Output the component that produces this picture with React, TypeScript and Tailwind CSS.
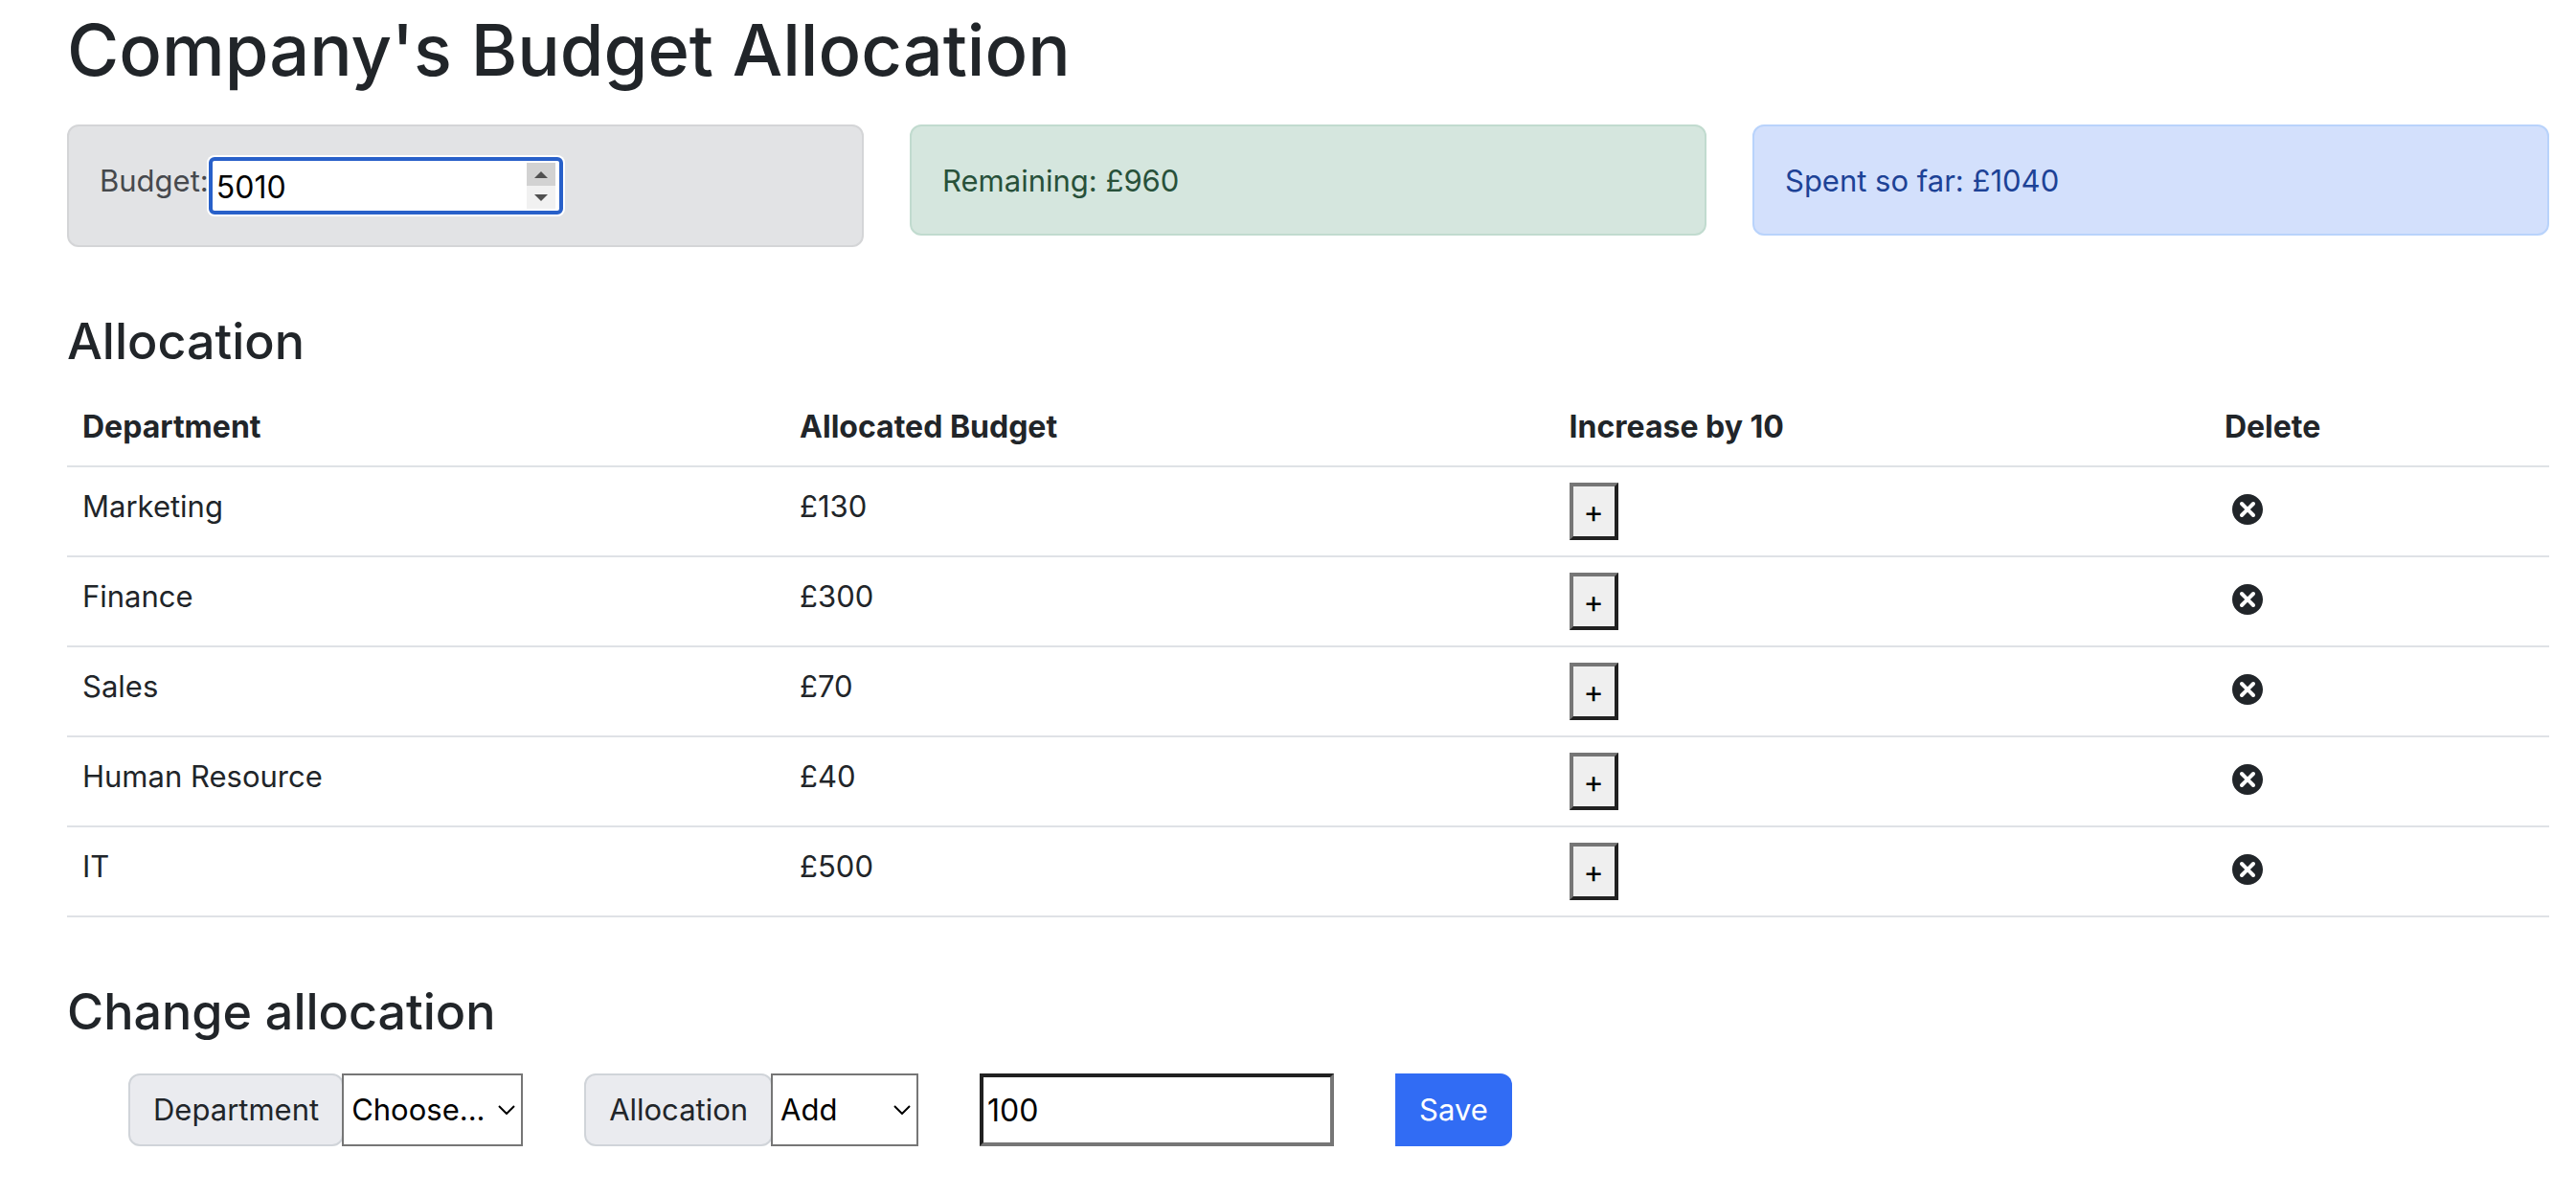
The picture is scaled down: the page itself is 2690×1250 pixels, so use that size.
import { useState } from "react";
import type { ReactNode } from "react";

type Department = { name: string; budget: number };

const initial: Department[] = [
  { name: "Marketing", budget: 130 },
  { name: "Finance", budget: 300 },
  { name: "Sales", budget: 70 },
  { name: "Human Resource", budget: 40 },
  { name: "IT", budget: 500 },
];

function DeleteIcon() {
  return (
    <svg viewBox="0 0 24 24" className="size-12 fill-[#212529]" aria-hidden="true">
      <path d="M12 4c-4.419 0-8 3.582-8 8s3.581 8 8 8 8-3.582 8-8-3.581-8-8-8zm3.707 10.293c.391.391.391 1.023 0 1.414-.195.195-.451.293-.707.293s-.512-.098-.707-.293l-2.293-2.293-2.293 2.293c-.195.195-.451.293-.707.293s-.512-.098-.707-.293c-.391-.391-.391-1.023 0-1.414l2.293-2.293-2.293-2.293c-.391-.391-.391-1.023 0-1.414s1.023-.391 1.414 0l2.293 2.293 2.293-2.293c.391-.391 1.023-.391 1.414 0s.391 1.023 0 1.414l-2.293 2.293 2.293 2.293z" />
    </svg>
  );
}

function Chevron() {
  return (
    <svg
      viewBox="0 0 18 10"
      className="pointer-events-none absolute top-1/2 right-2 h-2.5 w-4.5 -translate-y-1/2 fill-none stroke-black stroke-2"
      aria-hidden="true"
    >
      <path d="M1 1l8 8 8-8" />
    </svg>
  );
}

function SelectGroup({ id, label, width, children }: { id: string; label: string; width: string; children: ReactNode }) {
  return (
    <div className="flex h-19">
      <label
        htmlFor={id}
        className="flex items-center rounded-xl border-2 border-[#d0d4d9] bg-[#eaebef] px-6 text-[31px]"
      >
        {label}
      </label>
      <div className="relative -ml-0.5 flex">
        <select
          id={id}
          className={`${width} appearance-none border-2 border-[#767676] bg-white pl-2 text-[31px] text-black`}
        >
          {children}
        </select>
        <Chevron />
      </div>
    </div>
  );
}

export default function App() {
  const [budget, setBudget] = useState("5010");
  const [cost, setCost] = useState("100");
  const [rows, setRows] = useState(initial);
  const step = (n: number) => setBudget(String(Number(budget) + n));

  return (
    <main className="bg-white pr-7 pl-[70px] font-['Inter',sans-serif] text-[31px] leading-12 text-[#212529]">
      <h1 className="pt-1 text-[74px] leading-24 font-medium">Company's Budget Allocation</h1>

      <div className="mt-[30px] grid grid-cols-3 items-start gap-12">
        <div className="flex rounded-xl border-2 border-[#d4d5d7] bg-[#e2e3e5] p-8 text-[#46494d]">
          <label htmlFor="budget" className="leading-[50px]">
            Budget:
          </label>
          <div className="relative flex">
            <input
              id="budget"
              type="text"
              inputMode="numeric"
              value={budget}
              onChange={(e) => setBudget(e.target.value)}
              className="h-15 w-[370px] rounded-md border-4 border-[#2860c9] bg-white pt-0.5 pl-1 text-[32px] text-black ring-2 ring-white outline-none"
            />
            <div className="absolute top-1.5 right-2 flex h-12 w-[30px] flex-col">
              <button
                type="button"
                aria-label="Increase budget"
                onClick={() => step(10)}
                className="flex flex-1 items-center justify-center bg-[#d2d2d2]"
              >
                <svg viewBox="0 0 14 7" className="h-[7px] w-3.5 fill-[#505050]">
                  <path d="M0 7l7-7 7 7z" />
                </svg>
              </button>
              <button
                type="button"
                aria-label="Decrease budget"
                onClick={() => step(-10)}
                className="flex flex-1 items-center justify-center bg-[#f1f1f1]"
              >
                <svg viewBox="0 0 14 7" className="h-[7px] w-3.5 fill-[#505050]">
                  <path d="M0 0l7 7 7-7z" />
                </svg>
              </button>
            </div>
          </div>
        </div>
        <div className="rounded-xl border-2 border-[#c1dbcf] bg-[#d5e6de] px-8 pt-[33px] pb-[31px] text-[#28513a]">
          Remaining: £960
        </div>
        <div className="rounded-xl border-2 border-[#b9d3fb] bg-[#d3e0fc] px-8 pt-[33px] pb-[31px] text-[#1d4296]">
          Spent so far: £1040
        </div>
      </div>

      <h2 className="mt-16 text-[52px] leading-[70px] font-medium">Allocation</h2>

      <table className="mt-3.5 w-full table-fixed border-collapse text-left">
        <colgroup>
          <col className="w-[28.9%]" />
          <col className="w-[31%]" />
          <col className="w-[26.4%]" />
          <col />
        </colgroup>
        <thead>
          <tr className="border-b-2 border-[#dfe2e6] text-[32px]">
            <th scope="col" className="p-4 font-bold">Department</th>
            <th scope="col" className="p-4 font-bold">Allocated Budget</th>
            <th scope="col" className="p-4 font-bold">Increase by 10</th>
            <th scope="col" className="p-4 font-bold">Delete</th>
          </tr>
        </thead>
        <tbody>
          {rows.map((row) => (
            <tr key={row.name} className="border-b-2 border-[#dfe2e6] align-top">
              <td className="p-4 leading-[50px]">{row.name}</td>
              <td className="p-4 leading-[50px]">£{row.budget}</td>
              <td className="p-4">
                <button
                  type="button"
                  aria-label={`Increase ${row.name} by 10`}
                  onClick={() =>
                    setRows(rows.map((r) => (r.name === row.name ? { ...r, budget: r.budget + 10 } : r)))
                  }
                  className="block h-15 w-[51px] border-4 border-t-[#767676] border-r-[#212121] border-b-[#212121] border-l-[#767676] bg-[#efefef] pt-0.5 text-[32px] text-black"
                >
                  +
                </button>
              </td>
              <td className="px-4 pt-5">
                <button
                  type="button"
                  aria-label={`Delete ${row.name}`}
                  onClick={() => setRows(rows.filter((r) => r.name !== row.name))}
                  className="block"
                >
                  <DeleteIcon />
                </button>
              </td>
            </tr>
          ))}
        </tbody>
      </table>

      <h2 className="mt-16 text-[52px] leading-[70px] font-medium">Change allocation</h2>

      <form className="mt-[29px] flex gap-16 pl-16" onSubmit={(e) => e.preventDefault()}>
        <SelectGroup id="department" label="Department" width="w-[189px]">
          <option>Choose...</option>
          {initial.map((d) => (
            <option key={d.name}>{d.name}</option>
          ))}
        </SelectGroup>
        <SelectGroup id="action" label="Allocation" width="w-[154px]">
          <option>Add</option>
          <option>Reduce</option>
        </SelectGroup>
        <input
          type="text"
          inputMode="numeric"
          aria-label="Cost"
          value={cost}
          onChange={(e) => setCost(e.target.value)}
          className="h-19 w-[370px] border-4 border-t-[#212121] border-r-[#767676] border-b-[#767676] border-l-[#212121] bg-white pl-1 text-[32px] text-black"
        />
        <button type="submit" className="h-19 rounded-r-xl bg-[#316cf4] px-[25px] text-white">
          Save
        </button>
      </form>
    </main>
  );
}
